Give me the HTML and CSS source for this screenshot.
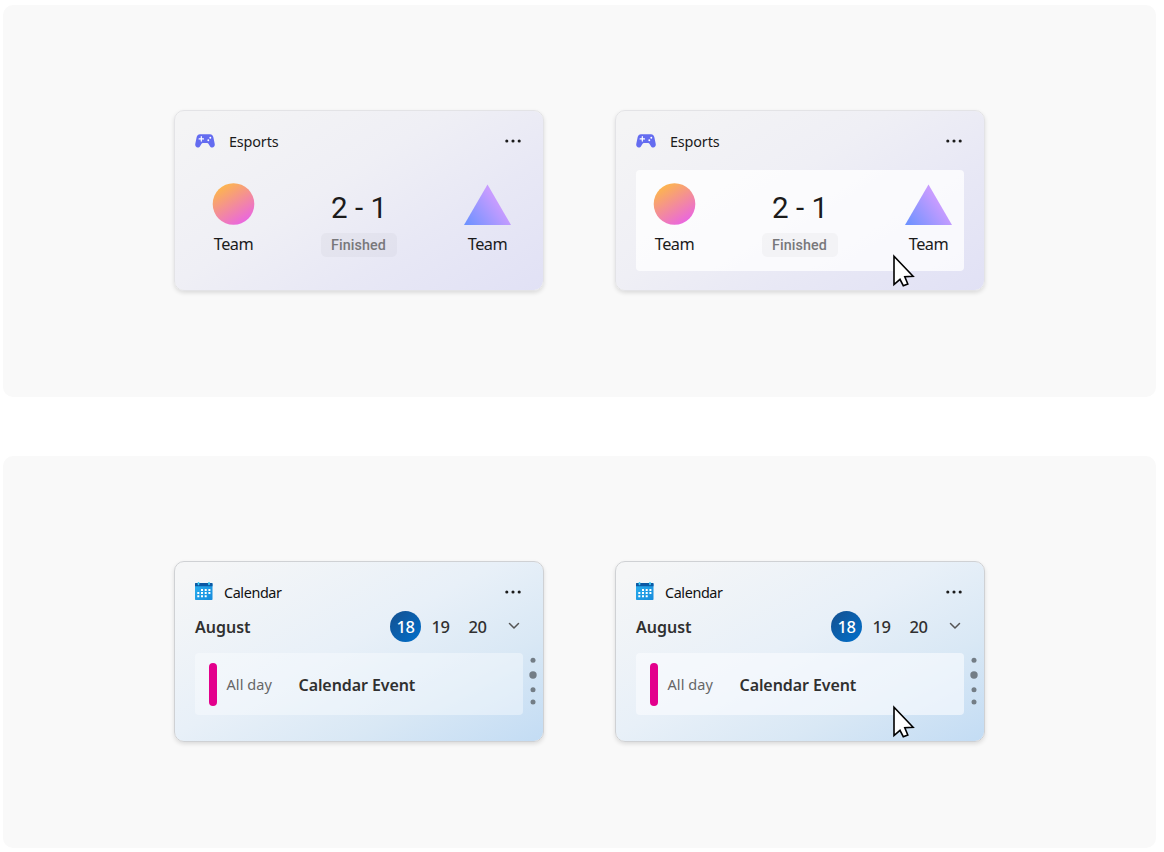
FILE: index.html
```html
<!DOCTYPE html>
<html lang="en">
<head>
<meta charset="utf-8">
<title>Widget cards</title>
<link rel="stylesheet" href="styles.css">
</head>
<body>
<svg class="defs" width="0" height="0" aria-hidden="true">
  <defs>
    <linearGradient id="sun" x1="0.2" y1="0.05" x2="0.75" y2="0.95"><stop offset="0" stop-color="#fdb74a"/><stop offset="1" stop-color="#ea66e0"/></linearGradient>
    <linearGradient id="tri" gradientUnits="userSpaceOnUse" x1="2" y1="40" x2="32" y2="18"><stop offset="0" stop-color="#6f92ff"/><stop offset="1" stop-color="#c79cff"/></linearGradient>
    <linearGradient id="cal" x1="0" y1="0" x2="1" y2="1"><stop offset="0" stop-color="#2bb0ee"/><stop offset="1" stop-color="#168bdc"/></linearGradient>
    <symbol id="gamepad" viewBox="0 0 20 14">
      <path fill="#646cf0" fill-rule="evenodd" d="M5 0.2C3.2 0.2 2.2 1.4 1.7 3L0.3 9.7C-.1 11.8.9 13.5 2.7 13.5c1.2 0 1.9-.6 2.5-1.6L6.4 10c.4-.6.8-.9 1.5-.9h4.2c.7 0 1.100.3 1.500.9l1.200 1.900c.6 1 1.300 1.600 2.500 1.600 1.800 0 2.800-1.700 2.400-3.800L18.300 3C17.800 1.400 16.800.2 15 .2z"/>
      <path d="M6.300 2.700v4.400M4.100 4.900h4.400" stroke="#fff" stroke-width="1.200" stroke-linecap="round"/>
      <circle cx="15.300" cy="3.700" r="0.950" fill="#fff"/><circle cx="13.300" cy="6.200" r="0.950" fill="#fff"/>
    </symbol>
    <symbol id="calendar" viewBox="0 0 18 18">
      <rect y="1" width="17.500" height="17" rx="0.800" fill="url(#cal)"/>
      <path d="M0 1.700a.8.8 0 0 1 .8-.8h15.900a.8.8 0 0 1 .8.8V4.200H0z" fill="#0c59a4"/>
      <path d="M3.500 .8v1.500M14 .8v1.500" stroke="#42cdf5" stroke-width="1.700" stroke-linecap="round"/>
      <path d="M6 8.100h10M2.300 11.100h14M2.300 14.300h10.200" stroke="#fff" stroke-width="2" stroke-dasharray="2 1.700"/>
    </symbol>
    <symbol id="more" viewBox="0 0 16 4"><g fill="#1b1b1b"><circle cx="1.800" cy="2" r="1.550"/><circle cx="8" cy="2" r="1.550"/><circle cx="14.200" cy="2" r="1.550"/></g></symbol>
    <symbol id="pointer" viewBox="0 0 24 34"><path d="M2 2.200V30.600l6-5.300 3.300 6.400 4.500-1.700-3-7.200 8.300-.5z" fill="#fff" stroke="#000" stroke-width="1.600"/></symbol>
    <symbol id="pages" viewBox="0 0 8 50"><g fill="#737d86"><circle cx="4" cy="4.300" r="2.500"/><circle cx="4" cy="19" r="3.700"/><circle cx="4" cy="33.700" r="2.500"/><circle cx="4" cy="46" r="2.500"/></g></symbol>
  </defs>
</svg>
<main class="gallery">
  <section class="stage">
    <article class="card esports">
      <header class="head"><svg class="pad"><use href="#gamepad"/></svg><span class="title">Esports</span><svg class="more"><use href="#more"/></svg></header>
      <div class="match">
        <div class="team"><svg class="crest" viewBox="0 0 47 42"><circle cx="23.500" cy="21" r="20.800" fill="url(#sun)"/></svg><span>Team</span></div>
        <div class="result"><span class="score">2 - 1</span><span class="status">Finished</span></div>
        <div class="team away"><svg class="crest" viewBox="0 0 47 42"><path d="M23.500 1.500L47 42H0z" fill="url(#tri)"/></svg><span>Team</span></div>
      </div>
    </article>
    <article class="card esports">
      <header class="head"><svg class="pad"><use href="#gamepad"/></svg><span class="title">Esports</span><svg class="more"><use href="#more"/></svg></header>
      <div class="match hover">
        <div class="team"><svg class="crest" viewBox="0 0 47 42"><circle cx="23.500" cy="21" r="20.800" fill="url(#sun)"/></svg><span>Team</span></div>
        <div class="result"><span class="score">2 - 1</span><span class="status">Finished</span></div>
        <div class="team away"><svg class="crest" viewBox="0 0 47 42"><path d="M23.500 1.500L47 42H0z" fill="url(#tri)"/></svg><span>Team</span></div>
      </div>
      <svg class="pointer"><use href="#pointer"/></svg>
    </article>
  </section>
  <section class="stage">
    <article class="card agenda">
      <header class="head"><svg class="cal"><use href="#calendar"/></svg><span class="title">Calendar</span><svg class="more"><use href="#more"/></svg></header>
      <div class="dates"><span class="month">August</span><span class="day today">18</span><span class="day">19</span><span class="day last">20</span><svg class="chevron" viewBox="0 0 12 8"><path d="M1.500 1.500L6 6l4.500-4.500"/></svg></div>
      <div class="row">
        <div class="event"><i class="bar"></i><span class="when">All day</span><span class="what">Calendar Event</span></div>
        <svg class="pages"><use href="#pages"/></svg>
      </div>
    </article>
    <article class="card agenda">
      <header class="head"><svg class="cal"><use href="#calendar"/></svg><span class="title">Calendar</span><svg class="more"><use href="#more"/></svg></header>
      <div class="dates"><span class="month">August</span><span class="day today">18</span><span class="day">19</span><span class="day last">20</span><svg class="chevron" viewBox="0 0 12 8"><path d="M1.500 1.500L6 6l4.500-4.500"/></svg></div>
      <div class="row">
        <div class="event hover"><i class="bar"></i><span class="when">All day</span><span class="what">Calendar Event</span></div>
        <svg class="pages"><use href="#pages"/></svg>
      </div>
      <svg class="pointer"><use href="#pointer"/></svg>
    </article>
  </section>
</main>
</body>
</html>
```
FILE: styles.css
```css
* { box-sizing: border-box; }
body { margin: 0; background: #fff; color: #1b1b1b; font-family: "Noto Sans", sans-serif; white-space: nowrap; }
svg { display: block; flex: none; }
.defs { position: absolute; }
.gallery { display: grid; gap: 59px; padding: 5px 8px 4px 3px; }
.stage { display: flex; gap: 71px; height: 392px; padding: 105px 0 0 171px; background: #f9f9f9; border-radius: 10px; }
.card { position: relative; width: 370px; height: 181px; padding: 0 20px; border: 1px solid; border-radius: 10px; background-clip: padding-box; box-shadow: 0 2px 4px rgba(0,0,0,.12); }
.esports { border-color: #e3e3e6; background-image: linear-gradient(148deg, #f4f4f5 5%, #efeff5 42%, #e8e8f5 68%, #e1e1f5 100%); }
.agenda { border-color: #cfd1d4; background-image: linear-gradient(152deg, #f5f6f7 5%, #e8f0f8 46%, #d9e8f5 72%, #c3dcf4 100%); }
.head { display: flex; align-items: center; height: 59px; }
.pad { width: 20px; height: 14px; margin-left: -.5px; }
.cal { width: 18px; height: 18px; margin-top: -1px; }
.title { margin: 2px 0 0 14.500px; font-size: 14.400px; line-height: 20px; letter-spacing: -.15px; }
.agenda .title { margin-left: 11px; color: #111; letter-spacing: -.4px; }
.more { width: 16px; height: 4px; margin: 0 2px 0 auto; }
.match { display: grid; grid-template-columns: 77px 173px 78px; height: 101px; border-radius: 4px; }
.match.hover { background: rgba(255,255,255,.76); }
.team { display: flex; flex-direction: column; align-items: center; padding-top: 13px; font-size: 16.300px; line-height: 22px; letter-spacing: -.5px; }
.team span { margin-top: 8px; }
.away { padding-left: 7px; }
.crest { width: 47px; height: 42px; }
.result { display: flex; flex-direction: column; align-items: center; padding-top: 20px; font-family: Roboto, sans-serif; }
.score { padding-left: 1px; font-size: 29.500px; line-height: 36px; }
.status { width: 76px; margin-top: 7px; border-radius: 5px; background: rgba(0,0,0,.027); color: #78787b; font-size: 14.300px; font-weight: 500; line-height: 24px; text-align: center; letter-spacing: .1px; }
.dates { display: flex; align-items: center; height: 32px; margin-top: -11px; padding-right: 3.500px; color: #303030; font-size: 16px; font-weight: 600; }
.month { width: 195px; margin-top: 2px; line-height: 22px; }
.day { width: 31px; height: 31px; line-height: 31px; font-size: 16.500px; font-weight: 500; text-align: center; letter-spacing: -.5px; }
.today { margin-right: 4px; border-radius: 50%; background: linear-gradient(135deg, #15508f, #0070cc); color: #fff; }
.last { margin-left: 6px; }
.chevron { width: 12px; height: 8px; margin: -1px 0 0 auto; fill: none; stroke: #555; stroke-width: 1.500; stroke-linecap: round; stroke-linejoin: round; }
.row { display: flex; align-items: center; gap: 6px; margin: 11px -20px 0 0; }
.event { display: flex; align-items: center; width: 328px; height: 62px; padding-left: 14px; border-radius: 4px; background: rgba(250,252,255,.43); }
.event.hover { background: rgba(250,252,255,.62); }
.bar { width: 8px; height: 43px; border-radius: 4px; background: #e3008c; }
.when { width: 72px; margin-left: 9.500px; color: #666; font-size: 14.500px; letter-spacing: .08px; }
.what { margin-top: 1px; color: #303030; font-size: 16px; font-weight: 600; letter-spacing: -.08px; }
.pages { width: 8px; height: 50px; margin-top: -6px; }
.pointer { position: absolute; left: 276px; top: 143px; width: 24px; height: 34px; }
```
